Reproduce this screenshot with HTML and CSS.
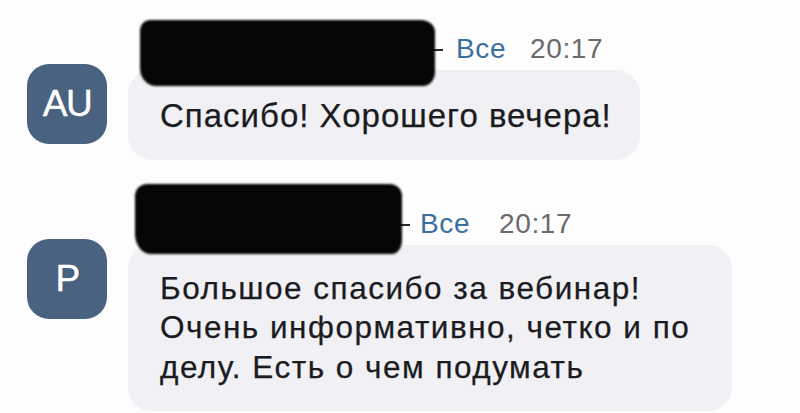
FILE: index.html
```html
<!DOCTYPE html>
<html lang="ru">
<head>
<meta charset="utf-8">
<title>Чат</title>
<link rel="stylesheet" href="styles.css">
</head>
<body>
<div class="chat">
  <div class="msg msg-first">
    <div class="avatar"><span>AU</span></div>
    <div class="body">
      <div class="header header-first">
        <span class="redact"></span>
        <span class="dash"></span>
        <span class="to">Все</span>
        <span class="time">20:17</span>
      </div>
      <div class="bubble bubble-first">Спасибо! Хорошего вечера!</div>
    </div>
  </div>
  <div class="msg msg-second">
    <div class="avatar"><span>P</span></div>
    <div class="body">
      <div class="header header-second">
        <span class="redact"></span>
        <span class="dash"></span>
        <span class="to">Все</span>
        <span class="time">20:17</span>
      </div>
      <div class="bubble bubble-second">Большое спасибо за вебинар!<br>Очень информативно, четко и по<br>делу. Есть о чем подумать</div>
    </div>
  </div>
</div>
</body>
</html>
```

FILE: styles.css
```css
html, body {
  margin: 0;
  padding: 0;
  background: #fdfdfe;
  overflow: hidden;
}
.chat {
  width: 800px;
  height: 413px;
  padding-top: 35px;
  box-sizing: border-box;
  font-family: "Liberation Sans", Arial, sans-serif;
  color: #1b1c1f;
}
.msg {
  display: flex;
  gap: 21px;
  padding-left: 27px;
}
.msg-second {
  margin-top: 50px;
}
.avatar {
  width: 80px;
  height: 80px;
  flex: none;
  margin-top: 29px;
  border-radius: 22px;
  background: #48627f;
  color: #ffffff;
  display: flex;
  align-items: center;
  justify-content: center;
  font-size: 37px;
  letter-spacing: -1.5px;
  -webkit-text-stroke: 0.4px #ffffff;
}
.body {
  display: flex;
  flex-direction: column;
}
.header {
  display: flex;
  align-items: flex-start;
  height: 27px;
  line-height: 27px;
  font-size: 28px;
  letter-spacing: 0.6px;
  margin-bottom: 8px;
  position: relative;
  z-index: 2;
}
.redact {
  display: block;
  background: #060606;
  filter: blur(1.2px);
}
.header-first .redact {
  width: 295px;
  height: 66px;
  margin-left: 12px;
  margin-top: -15px;
  border-radius: 10px 14px 12px 16px / 10px 12px 14px 18px;
}
.header-second .redact {
  width: 267px;
  height: 70px;
  margin-left: 7px;
  margin-top: -26px;
  border-radius: 12px 12px 10px 16px / 12px 12px 14px 20px;
}
.dash {
  display: block;
  height: 2px;
  background: #2a2a2a;
  margin-top: 14px;
}
.header-first .dash {
  width: 14px;
  margin-left: -6px;
  margin-right: 13px;
}
.header-second .dash {
  width: 12px;
  margin-left: -4px;
  margin-right: 10px;
}
.to {
  color: #3b6f9f;
}
.time {
  color: #6a6a6c;
}
.header-first .time {
  margin-left: 24px;
}
.header-second .time {
  margin-left: 29px;
}
.bubble {
  background: #f0f0f5;
  border-radius: 24px;
  line-height: 39.5px;
  padding-left: 32px;
  -webkit-text-stroke: 0.25px #1b1c1f;
}
.bubble-first {
  font-size: 33px;
  letter-spacing: 1px;
  width: 480px;
  padding-top: 26px;
  padding-bottom: 24px;
}
.bubble-second {
  font-size: 31.5px;
  letter-spacing: 1.5px;
  width: 572px;
  padding-top: 24px;
  padding-bottom: 24px;
}
```
